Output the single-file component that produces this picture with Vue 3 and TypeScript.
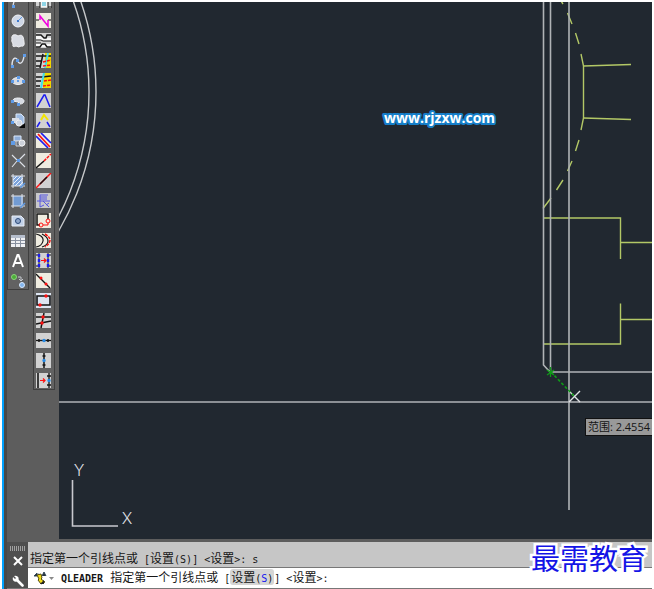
<script setup lang="ts">
import { ref } from 'vue'

interface Shape { d: string; s?: string; f?: string; w?: number; dash?: string }
interface Tool { name: string; bg?: string; shapes: Shape[] }
interface Part { text: string; cjk: boolean }

const light = '#dfe3ea'
const node = '#5f9be6'
const red = '#ff1010'
const blue = '#1c1cf0'
const ink = '#151515'
const cream = '#efece0'
const silver = '#d2d2d2'

const line = (d: string, s = ink, w = 1.5, dash?: string): Shape => ({ d, s, w, dash })
const fill = (d: string, f: string): Shape => ({ d, f })
const dot = (x: number, y: number, r: number, f: string, s?: string): Shape => ({
  d: `M${x - r} ${y}a${r} ${r} 0 1 0 ${2 * r} 0a${r} ${r} 0 1 0 ${-2 * r} 0`, f, s, w: 1,
})
const box = (x: number, y: number, w: number, h: number, f: string): Shape => fill(`M${x} ${y}h${w}v${h}h${-w}z`, f)

const drawTools: Tool[] = [
  { name: 'Arc', shapes: [line('M3 13Q4 4 12 1', light, 1.3), box(2, 12, 3, 3, node)] },
  { name: 'Circle', shapes: [dot(8, 8, 6, '#cfd7e6', '#f2f4f8'), line('M8 8L12 4', node, 1), box(7, 7, 2, 2, '#3d78cc')] },
  { name: 'Revision cloud', shapes: [{ d: 'M3 2Q6 1 8 3Q12 1 13 4Q14 7 14 9Q15 14 11 13Q9 15 6 13Q2 15 3 11Q1 8 2 6Q1 4 3 2z', f: '#d9dce3', s: '#f0f0f2', w: 1 }] },
  { name: 'Spline', shapes: [line('M2 13C2 3 7 4 8 8S13 11 14 3', light, 1.4), box(1, 12, 3, 3, node), box(6, 6, 3, 3, node), box(13, 1, 3, 3, node)] },
  { name: 'Ellipse', shapes: [{ d: 'M2 8a6 3.500 0 1 0 12 0a6 3.500 0 1 0-12 0', f: '#d6dae2', s: '#eef0f4', w: 1 }, box(1, 7, 3, 3, node), box(12, 7, 3, 3, node), box(7, 3, 3, 3, node), box(7, 7, 2, 2, node)] },
  { name: 'Elliptical arc', shapes: [{ d: 'M3 8C2 4 14 4 14 8C14 10 12 11 10 11L8 9z', f: '#d6dae2', s: '#eef0f4', w: 1 }, box(1, 7, 3, 3, node), box(7, 10, 3, 3, node)] },
  { name: 'Insert block', shapes: [{ d: 'M6 1h5l3 3v7H6z', f: '#9fbce3', s: '#dce8f8', w: 1 }, box(2, 5, 7, 5, '#d8dee8'), box(1, 8, 3, 3, node), dot(9, 10, 3, '#d0d6e0', '#eeeeee'), fill('M15 10v5h-6z', '#080808')] },
  { name: 'Make block', shapes: [{ d: 'M4 3h7v5H4z', f: '#8faed9', s: '#dce8f8', w: 1 }, box(1, 8, 4, 4, node), { d: 'M6 8h7v5H6z', f: '#6c7480', s: '#cdd1d8', w: 1 }, dot(12, 10, 3, '#cdd2da', '#f1f1f1')] },
  { name: 'Point', shapes: [line('M2 2L7 7M9 8L15 14M15 1L9 7M7 8L2 14', light, 1.1), box(7, 6, 3, 3, node)] },
  { name: 'Hatch', shapes: [box(3, 3, 10, 10, '#7da4db'), line('M3 7l4-4M3 11l8-8M5 13l8-8M9 13l4-4', '#ecf3ff', 1), line('M3 1v14M12 1v14M1 3h14M1 13h14', light, 1), line('M10 15l5-5', node, 1.5)] },
  { name: 'Gradient', shapes: [box(3, 3, 10, 10, '#729bd2'), line('M3 1v14M12 1v14M1 3h14M1 13h14', light, 1), line('M10 15l5-5', node, 1.5)] },
  { name: 'Region', shapes: [{ d: 'M2 3h9l3 3v7H2z', f: '#c3d2e8', s: '#e9eef6', w: 1 }, dot(8, 8, 2.5, '#8fa6c9', '#2c4a7a')] },
  { name: 'Table', shapes: [box(1, 2, 14, 12, '#f0f1f4'), box(1, 2, 14, 3, '#b5bdcb'), line('M1 7.500h14M1 10.500h14M5.500 5v9M10.500 5v9', '#8991a0', 1)] },
  { name: 'Multiline text', shapes: [line('M3 14L7.500 2h1L13 14M5 10h6', '#ffffff', 2)] },
  { name: 'Add selected', shapes: [dot(4, 4, 2.5, '#4cad39', '#8bd77b'), dot(12, 12, 2.5, '#83b5ed', '#d9eaff'), line('M8 4h3v4M9 6l2 2l2-2', '#c5c9cf', 1)] },
]

const editTools: Tool[] = [
  { name: 'Column', bg: silver, shapes: [box(4, 0, 8, 14, '#f4f4f4'), line('M4 0v15M12 0v15M0 14h4M12 14h4', ink, 1), box(6, 5, 4, 8, '#8fd4e5')] },
  { name: 'Break line', bg: cream, shapes: [line('M0 7h3M12 7h3', ink, 1), line('M4 7V3L12 13V7', '#f000e0', 1.5)] },
  { name: 'Pipe break', bg: silver, shapes: [fill('M0 2h5l3 3h7v3H0zM0 10h7l3 1h5v3H0z', '#f8f8f8'), line('M0 2h5l3 3h2l1-3h4M0 14h4l2-3h3l2 3h4', ink, 1.4), line('M0 7h5l2 1h8M0 10h5', ink, 1)] },
  { name: 'Trim to edge', bg: silver, shapes: [box(9, 0, 6, 15, '#f2d900'), line('M0 3h15M0 8h5M0 13h4M7 1L4 15', ink, 1.5), line('M12 0L9 15', '#40dceb', 2), line('M7 9L15 7M7 13L15 12', red, 1.5, '3 1')] },
  { name: 'Extend to edge', bg: silver, shapes: [box(7, 0, 8, 15, '#f2d900'), line('M0 4h6l9-1M0 8h5M0 13h4', ink, 1.5), line('M8 0L5 15', '#40dceb', 2), line('M8 8L15 7M7 13L15 12', red, 1.5, '3 1')] },
  { name: 'Angle', bg: silver, shapes: [line('M1 14L8 2h1L14 14', blue, 1.5)] },
  { name: 'Angle apex', bg: silver, shapes: [line('M1 14L4 9M11 9L14 14', blue, 1.5), line('M5 7L8 2L12 7', '#f2e400', 2)] },
  { name: 'Parallel lines', bg: cream, shapes: [line('M0 3L12 15M5 0L15 10', blue, 1.7), line('M2 1L14 14', red, 1.7)] },
  { name: 'Join', bg: cream, shapes: [line('M0 15L8 8', ink, 1.5), line('M8 8L15 1', red, 1.5, '3 1')] },
  { name: 'Extend line', bg: silver, shapes: [line('M0 15L15 0', red, 1.5), line('M4 11L11 4', ink, 1.5)] },
  { name: 'Length', bg: '#c9c9cb', shapes: [line('M4 8V2h8M4 4h7M4 6h7M1 8h13M4 8v6l4-2M7 8L13 14M13 10l-3 2', '#5656e0', 1)] },
  { name: 'Connect ends', bg: cream, shapes: [line('M4 12H1V1h11v5', ink, 1.5), dot(5, 12, 2, 'none', red), dot(12, 8, 2, 'none', red), line('M7 12h5v-2', red, 1)] },
  { name: 'Offset arc', bg: cream, shapes: [line('M0 1Q8 3 7 8Q6 13 0 14M6 1Q12 4 12 8Q12 12 6 14', ink, 1.2), line('M9 1Q19 7 9 14', red, 1.5, '3 1')] },
  { name: 'Stretch', bg: silver, shapes: [line('M3 0v15M12 0v15M0 2h3M12 2h3M0 13h3M12 13h3', ink, 1), line('M3 1v14M12 1v14', blue, 2.4, '3 2'), line('M5 7.500h5M8 5.500l2 2l-2 2', red, 1.2)] },
  { name: 'Divide line', bg: cream, shapes: [line('M0 1L14 15', ink, 1.3), dot(5, 5, 1.5, red), dot(10, 11, 1.5, red)] },
  { name: 'Rectangle', bg: '#dde5f2', shapes: [line('M1 3h13v9H1z', ink, 1.6), dot(10, 3, 1.7, red), dot(4, 12, 1.7, red)] },
  { name: 'Intersections', bg: silver, shapes: [line('M0 4h15M0 11L15 8M8 0L5 15', ink, 1.5), dot(7, 4, 1.7, red), dot(6, 10, 1.7, red)] },
  { name: 'Align horizontal', bg: silver, shapes: [line('M0 7.500h15', ink, 1.3), line('M3 6v3M12 6v3', ink, 1.5), dot(8, 7.5, 1.7, '#268be6')] },
  { name: 'Align vertical', bg: silver, shapes: [line('M8 0v15M6.500 3h3M6.500 12h3', ink, 1.5), dot(8, 7.5, 1.7, '#268be6')] },
  { name: 'Move to line', bg: silver, shapes: [line('M2 0v15', ink, 1.6), line('M13 0v15M11 3h4M11 12h4', ink, 1.3), line('M4 7.500h5M7 5.500l2 2l-2 2', red, 1.2), dot(13, 7.5, 1.7, '#268be6')] },
]

const toolbars = [
  { name: 'Draw', tools: drawTools },
  { name: 'Edit', tools: editTools },
]

const split = (text: string): Part[] =>
  (text.match(/[\u4e00-\u9fff]+|[^\u4e00-\u9fff]+/g) ?? []).map(t => ({ text: t, cjk: /[\u4e00-\u9fff]/.test(t) }))

const history = split('指定第一个引线点或 [设置(S)] <设置>: s')
const promptStart = split('指定第一个引线点或 [')
const promptEnd = split('] <设置>:')
const distance = ref('2.4554')
</script>

<template>
  <div class="window">
    <main class="workspace">
      <aside class="docks">
        <div v-for="bar in toolbars" :key="bar.name" class="toolbar" role="toolbar" :aria-label="bar.name">
          <button v-for="tool in bar.tools" :key="tool.name" type="button" class="tool" :aria-label="tool.name">
            <svg viewBox="0 0 16 16" class="icon">
              <rect v-if="tool.bg" width="15" height="15" :fill="tool.bg" />
              <path
                v-for="(p, i) in tool.shapes" :key="i" :d="p.d" :fill="p.f ?? 'none'"
                :stroke="p.s ?? 'none'" :stroke-width="p.w ?? 1" :stroke-dasharray="p.dash"
              />
            </svg>
          </button>
        </div>
      </aside>

      <section class="canvas">
        <svg class="drawing" viewBox="59 2 593 537" preserveAspectRatio="xMinYMin slice">
          <g class="arcs">
            <circle cx="-181" cy="92" r="277" />
            <circle cx="-181" cy="92" r="270" />
          </g>
          <g class="fixture">
            <path d="M561 1L563 4M567.500 13L572 24M575.500 33L579 44M581 54L583.500 66V118L581 130M579 140L575.500 151M572 161L567.500 171M563 180L556.500 190M551 198L543 208.500" />
            <path d="M583.500 66L631 64.500M583.500 118L631 119.500" />
            <path d="M543 218H620.500V259M620.500 242.500H652M620.500 303.500V344H543M620.500 319.500H652" />
          </g>
          <g class="walls">
            <path d="M543.500 2V365L550 372H652M550.500 2V372" />
            <path d="M569 2V510M59 402H652" />
          </g>
          <path class="cross" d="M569 391L580 402M580 391L569 402" />
          <path class="track" d="M551 372L574 396" />
          <path class="snap" d="M550.500 367V377M547 375L554 370M547 370L554 375" />
          <path class="axes" d="M72.500 480V526H118" />
          <text class="axis" x="79" y="476">Y</text>
          <text class="axis" x="127" y="524">X</text>
          <text class="site" x="384" y="123">www.rjzxw.com</text>
        </svg>
        <output class="tooltip">范围: {{ distance }}</output>
      </section>
    </main>

    <footer class="command">
      <div class="handle">
        <span class="grip"></span>
        <button type="button" aria-label="Close">
          <svg viewBox="0 0 12 12"><path d="M2 2L10 10M10 2L2 10" stroke="#fff" stroke-width="2" /></svg>
        </button>
        <button type="button" aria-label="Customize">
          <svg viewBox="0 0 12 12">
            <path d="M5 5L10.500 10.500" stroke="#fff" stroke-width="2.600" stroke-linecap="round" />
            <path d="M1 2L3 4L4 3L2 1Q5 0 6.500 2.500Q7 4 6 6Q4 7 2.500 6.500Q0 5 1 2z" fill="#fff" />
          </svg>
        </button>
      </div>
      <div class="lines">
        <p class="line past">
          <span v-for="(p, i) in history" :key="i" :class="{ latin: !p.cjk }">{{ p.text }}</span>
        </p>
        <div class="line current">
          <button type="button" class="recent" aria-label="Recent commands">
            <svg viewBox="0 0 24 16">
              <path d="M4 6L7 3V6zM8 4L10 5M12 6L14 2L16 6M13 5h2" fill="#222" stroke="#31465a" />
              <path d="M7 5L11 4L12 8L11 9L15 12L11 14L8 10L9 9z" fill="#f2dc18" stroke="#544b0c" />
              <path d="M10 14L14 10V14z" fill="#222" />
              <path d="M19 7h5l-2.500 3z" fill="#8a8a8a" />
            </svg>
          </button>
          <p class="prompt">
            <strong class="latin name">QLEADER</strong>
            <span v-for="(p, i) in promptStart" :key="i" :class="{ latin: !p.cjk }">{{ p.text }}</span>
            <button type="button" class="option">设置<span class="latin">(<b>S</b>)</span></button>
            <span v-for="(p, i) in promptEnd" :key="'e' + i" :class="{ latin: !p.cjk }">{{ p.text }}</span>
          </p>
        </div>
      </div>
      <div class="brand">最需教育</div>
    </footer>
  </div>
</template>

<style>
body { background: #fff; }
</style>

<style scoped>
.window {
  box-sizing: border-box;
  display: flex;
  flex-direction: column;
  min-height: 100vh;
  border: 2px solid #fff;
  border-bottom: 0;
  background: linear-gradient(90deg, #00a2ff 0 2px, #484848 2px 5px, #5d5d5d 5px);
}
button { border: 0; padding: 0; margin: 0; background: none; font: inherit; color: inherit; }
.workspace { flex: 1; display: flex; align-items: stretch; }
.docks { flex: none; display: flex; align-items: flex-start; gap: 4px; padding: 0 4px 0 5px; }
.toolbar {
  box-sizing: border-box;
  width: 22px;
  display: flex;
  flex-direction: column;
  align-items: center;
  gap: 4px;
  border: 1px solid #3f3f3f;
  border-top: 0;
  background: #626262;
}
.tool { display: flex; align-items: flex-end; width: 16px; height: 16px; overflow: hidden; }
.tool:first-child { height: 7px; }
.icon { flex: none; width: 16px; height: 16px; }
.canvas { position: relative; flex: 1; min-width: 0; background: #212830; overflow: hidden; }
.drawing { display: block; width: 100%; height: 100%; fill: none; }
.arcs { stroke: #c6c8ca; stroke-width: 1.4; }
.fixture { stroke: #b3c866; stroke-width: 1.4; }
.walls { stroke: #b0b3b6; stroke-width: 1.6; }
.cross { stroke: #e2e4e6; stroke-width: 1.4; }
.track { stroke: #109a18; stroke-width: 1.6; stroke-dasharray: 3 2; }
.snap { stroke: #109a18; stroke-width: 1.3; }
.axes { stroke: #c8c8ce; stroke-width: 1.6; }
.axis { font: 300 16px Inter, sans-serif; fill: #dcdee0; text-anchor: middle; }
.site {
  font: bold 14px "Open Sans", sans-serif;
  fill: #fff;
  stroke: #167fc9;
  stroke-width: 4px;
  stroke-linejoin: round;
  paint-order: stroke;
}
.tooltip {
  position: absolute;
  right: 0;
  top: 416px;
  box-sizing: border-box;
  height: 18px;
  padding: 0 2px;
  border: 1px solid #111;
  border-right: 0;
  background: #999;
  color: #151515;
  font: 11px/16px "Open Sans", "Noto Sans CJK SC", sans-serif;
  white-space: nowrap;
}
.command {
  position: relative;
  flex: none;
  display: flex;
  margin: 3px 0 0 5px;
  border-bottom: 1px solid #777;
}
.handle {
  flex: none;
  width: 21px;
  display: flex;
  flex-direction: column;
  align-items: center;
  gap: 4px;
  padding-top: 4px;
  box-sizing: border-box;
  background: #4f4f4f;
}
.grip {
  width: 16px;
  height: 5px;
  background: repeating-linear-gradient(90deg, #a0a0a0 0 1px, transparent 1px 2px);
}
.handle button { width: 12px; height: 12px; }
.handle button + button { margin-top: 4px; }
.handle svg { display: block; width: 12px; height: 12px; fill: none; }
.lines { flex: 1; min-width: 0; background: #fff; }
.line {
  box-sizing: border-box;
  display: flex;
  align-items: baseline;
  margin: 0;
  padding-left: 2px;
  color: #161616;
  font: 12px/18px "Noto Sans CJK SC", sans-serif;
  white-space: pre;
}
.latin { font-family: "DejaVu Sans Mono", "Liberation Mono", monospace; font-size: 10px; }
.past { height: 26px; padding-top: 7px; background: #c6c6c6; border-bottom: 1px solid #777; }
.current { height: 20px; align-items: center; }
.recent { width: 24px; height: 16px; margin-right: 7px; }
.recent svg { display: block; width: 24px; height: 16px; }
.prompt { display: flex; align-items: baseline; margin: 0; }
.name { margin-right: 7px; }
.option { padding: 0 1px; background: #d5d5d5; border-radius: 3px; line-height: 15px; }
.option .latin { line-height: 12px; }
.option b { color: #1616ee; font-weight: normal; }
.brand {
  position: absolute;
  right: 5px;
  bottom: 11px;
  color: #1414e6;
  font: 29px/40px "Noto Sans CJK SC", sans-serif;
  -webkit-text-stroke: 5px #fff;
  paint-order: stroke fill;
}
</style>
